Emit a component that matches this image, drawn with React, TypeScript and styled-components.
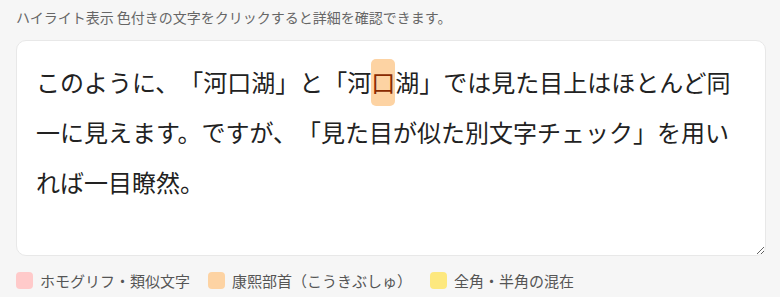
import styled, { createGlobalStyle } from 'styled-components'

const GlobalStyle = createGlobalStyle`
  html, body {
    margin: 0;
    padding: 0;
    background: #f6f6f6;
    font-family: "Noto Sans CJK JP", "Noto Sans", sans-serif;
  }
`

const Wrapper = styled.div`
  padding: 6px 14px 0 16px;
  display: flex;
  flex-direction: column;
`

const Caption = styled.div`
  font-size: 14px;
  line-height: 22px;
  color: #666;
  margin-bottom: 12px;
`

const Editor = styled.div`
  box-sizing: border-box;
  height: 216px;
  background: #fff;
  border: 1px solid #e8e8e8;
  border-radius: 10px;
  padding: 16px 24px 16px 19px;
  font-size: 24px;
  line-height: 50px;
  color: #222;
  overflow: hidden;
  resize: vertical;
  word-break: break-all;
  text-spacing-trim: space-all;
`

const Mark = styled.span<{ $kind: 'homoglyph' | 'radical' | 'width' }>`
  display: inline-block;
  height: 47px;
  line-height: 46px;
  vertical-align: top;
  margin-top: 2px;
  border-radius: 5px;
  color: #8a2a00;
  background: ${(p) =>
    p.$kind === 'homoglyph' ? '#ffc9c9' : p.$kind === 'radical' ? '#fdd3a3' : '#fde98a'};
  cursor: pointer;
`

const Legend = styled.div`
  display: flex;
  align-items: center;
  gap: 18px;
  margin-top: 14px;
`

const LegendItem = styled.div`
  display: flex;
  align-items: center;
  gap: 7px;
  font-size: 15px;
  color: #555;
`

const Swatch = styled.span<{ $color: string }>`
  width: 17px;
  height: 17px;
  border-radius: 4px;
  background: ${(p) => p.$color};
`

const legend = [
  { color: '#ffcaca', label: 'ホモグリフ・類似文字' },
  { color: '#fdd3a3', label: '康熙部首（こうきぶしゅ）' },
  { color: '#fde87e', label: '全角・半角の混在' },
]

export default function App() {
  return (
    <>
      <GlobalStyle />
      <Wrapper>
        <Caption>ハイライト表示 色付きの文字をクリックすると詳細を確認できます。</Caption>
        <Editor>
          このように、「河口湖」と「河<Mark $kind="radical">⼝</Mark>湖」では見た目上はほとんど同一に見えます。ですが、「見た目が似た別文字チェック」を用いれば一目瞭然。
        </Editor>
        <Legend>
          {legend.map((l) => (
            <LegendItem key={l.label}>
              <Swatch $color={l.color} />
              {l.label}
            </LegendItem>
          ))}
        </Legend>
      </Wrapper>
    </>
  )
}
